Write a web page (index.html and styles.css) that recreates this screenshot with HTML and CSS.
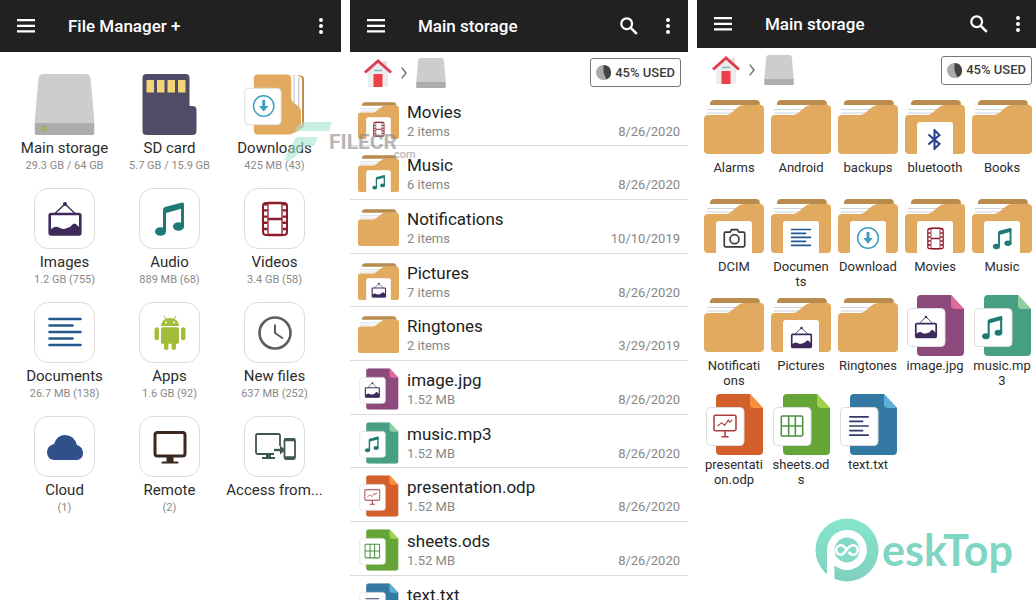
FILE: index.html
```html
<!DOCTYPE html>
<html lang="en">
<head>
<meta charset="utf-8">
<title>File Manager +</title>
<link rel="stylesheet" href="styles.css">
</head>
<body>
<svg class="sprite" aria-hidden="true">
  <defs>
    <linearGradient id="brandFill" x1="0" y1="0" x2="0" y2="1"><stop offset="0" stop-color="#86e6ce"/><stop offset="1" stop-color="#80cfbf"/></linearGradient>
  </defs>
  <symbol id="menu" viewBox="0 0 18 14"><path d="M0 1.2h18M0 6.8h18M0 12.4h18" stroke="#fff" stroke-width="2.2"/></symbol>
  <symbol id="dots" viewBox="0 0 4 16"><g fill="#fff"><circle cx="2" cy="2" r="2"/><circle cx="2" cy="8" r="2"/><circle cx="2" cy="14" r="2"/></g></symbol>
  <symbol id="search" viewBox="0 0 18 18"><g fill="none" stroke="#fff"><circle cx="6.7" cy="6.7" r="5.4" stroke-width="2.2"/><path d="M10.8 10.8l6 6" stroke-width="2.6"/></g></symbol>
  <symbol id="home" viewBox="0 0 28 28"><path d="M4 12L14 4l10 8v16H4z" fill="#ececec"/><path d="M19 2h4v7h-4z" fill="#e4e0e0"/><path d="M9.500 15h9v13h-9z" fill="#ee3e48"/><path d="M10 11.500h8" stroke="#7fb5bd" stroke-width="1.500"/><path d="M1 13.500L14 2l13 11.500" fill="none" stroke="#dc3f50" stroke-width="3"/></symbol>
  <symbol id="chevron" viewBox="0 0 6 12"><path d="M.7.700L5 6 .7 11.300" fill="none" stroke="#666" stroke-width="1.300"/></symbol>
  <symbol id="drive" viewBox="0 0 60 61"><path d="M9 0h42q4 0 5 4l4 45H0L4 4q1-4 5-4z" fill="#cdcdcd"/><path d="M0 49h60v10q0 2-2 2H2q-2 0-2-2z" fill="#adadad"/></symbol>
  <symbol id="driveOn" viewBox="0 0 60 61"><use href="#drive"/><circle cx="9" cy="54.500" r="2.600" fill="#a8b66a" stroke="#93b043"/></symbol>
  <symbol id="sd" viewBox="0 0 54 61"><path d="M4 0h39q4 0 4 4v28h3q4 0 4 4v21q0 4-4 4H4q-4 0-4-4V4q0-4 4-4z" fill="#514b67"/><path d="M4 6h7.500v12.500H4zM14.500 6H22v12.500h-7.500zM25 6h7.500v12.500H25zM35.500 6H43v12.500h-7.500z" fill="#f0d674"/></symbol>
  <symbol id="downloads" viewBox="0 0 62 61"><path d="M48 1h9q4 0 4 4v45q0 4-4 5h-9z" fill="#c48b46"/><path d="M44 1h9q6 1 6 4v47l-8 5z" fill="#fff"/><path d="M51 2v27M55.500 3v31" stroke="#c9cbd0" stroke-width="1.300"/><path d="M14 0h29q5 0 5 5v19q0 3 3 5l5 4q2 2 2 5v14q0 5-4 6l-7 3H14q-4 0-4-4V4q0-4 4-4z" fill="#e1aa5e"/><rect x=".7" y="14" width="37" height="37" rx="4" fill="#fff" stroke="#ddd"/><use href="#gDown" x="8" y="20" width="24" height="24"/></symbol>

  <symbol id="gPic" viewBox="0 0 36 36"><path d="M8 12.500L18 3l10 9.500" fill="none" stroke="#3d2a5b" stroke-width="1.300"/><circle cx="18" cy="3" r="2" fill="#3d2a5b"/><rect x="2.700" y="13" width="30.600" height="20.500" rx="1.500" fill="none" stroke="#3d2a5b" stroke-width="2.600"/><path d="M3 29q5-5 9-2.500t8 .5q3 0 5-3t5 0l3 3v7H3z" fill="#3d2a5b"/></symbol>
  <symbol id="gMusic" viewBox="0 0 36 36"><g fill="#1e7a74"><path d="M11 9q0-2 2-3L30 1.500q2-.5 2 1.500v4L14 12v18h-3z"/><path d="M29 4h3v23h-3z"/><ellipse cx="8.500" cy="30.500" rx="5.500" ry="4.300"/><ellipse cx="26.500" cy="25.500" rx="5.500" ry="4.300"/></g></symbol>
  <symbol id="gFilm" viewBox="0 0 36 36"><g fill="none" stroke="#8b1c2c"><rect x="6" y="2" width="24" height="32" rx="3" stroke-width="2"/><path d="M11 2v32M25 2v32" stroke-width="1.300"/><path d="M11 2h14M11 18h14M11 34h14" stroke-width="2.400"/><path d="M8.500 2v32M27.500 2v32" stroke-width="4" stroke-dasharray="2.400 3.800"/></g></symbol>
  <symbol id="gLines" viewBox="0 0 36 36"><path d="M2.500 4h31M2.500 10.500h23M2.500 17h31M2.500 23.500h23M2.500 30h31" stroke="#24578f" stroke-width="2.600" stroke-linecap="round"/></symbol>
  <symbol id="gText" viewBox="0 0 36 36"><path d="M2 3h32M2 10.500h23M2 18h32M2 25.500h23M2 33h32" stroke="#343a68" stroke-width="2.600"/></symbol>
  <symbol id="gDroid" viewBox="0 0 36 36"><g fill="#a1bd3a"><path d="M9 11q1-8 9-8t9 8z"/><rect x="9" y="12.300" width="18" height="16.500" rx="1.500"/><rect x="2.500" y="12.300" width="4.500" height="13" rx="2.200"/><rect x="29" y="12.300" width="4.500" height="13" rx="2.200"/><rect x="12" y="26" width="4.500" height="9" rx="2.200"/><rect x="19.500" y="26" width="4.500" height="9" rx="2.200"/></g><path d="M12 1l2 3M24 1l-2 3" stroke="#a1bd3a"/><circle cx="14" cy="7.500" r="1" fill="#fff"/><circle cx="22" cy="7.500" r="1" fill="#fff"/></symbol>
  <symbol id="gClock" viewBox="0 0 36 36"><g fill="none" stroke="#5a5e62"><circle cx="18" cy="18" r="15.500" stroke-width="2.600"/><path d="M18 9.500V18l8 5.500" stroke-width="2"/></g></symbol>
  <symbol id="gCloud" viewBox="0 0 36 36"><path d="M7 31q-7-1-7-8 0-6 7-8Q10 6 18 6q9 0 12 10 6 2 6 8 0 6-6 7z" fill="#30508b"/></symbol>
  <symbol id="gRemote" viewBox="0 0 36 36"><rect x="3" y="3.500" width="30" height="23.500" rx="2.500" fill="none" stroke="#3b2920" stroke-width="3"/><path d="M14.500 28h7v4.500h4q1 0 1 2h-17q0-2 1-2h4z" fill="#3b2920"/></symbol>
  <symbol id="gAccess" viewBox="0 0 42 36"><g fill="none" stroke="#40584e"><path d="M26 17V6.500Q26 5 24.500 5h-21Q2 5 2 6.500v17Q2 25 3.500 25H20" stroke-width="1.800"/><rect x="30.500" y="10" width="10.500" height="20" rx="1.500" stroke-width="1.800"/><path d="M30 11h11M30 28.500h11" stroke-width="2.400"/><path d="M20 21h9" stroke-width="2.400"/></g><path d="M26 16.500l5.500 4.500-5.500 4.500zM12 25h5v3h4v2H8v-2h4z" fill="#40584e"/></symbol>
  <symbol id="gDown" viewBox="0 0 36 36"><circle cx="18" cy="18" r="15.500" fill="none" stroke="#3f9cc0" stroke-width="2.200"/><path d="M15.800 9h4.400v9h5L18 26.500 10.800 18h5z" fill="#3f9cc0"/></symbol>
  <symbol id="gBlue" viewBox="0 0 36 36"><path d="M7.500 9.500l19 16L18 34V2l8.500 8.500-19 16" fill="none" stroke="#2c4394" stroke-width="3.600"/></symbol>
  <symbol id="gCam" viewBox="0 0 36 36"><g fill="none" stroke="#38383e" stroke-width="2.600"><path d="M4 8h7l2.500-4h9L25 8h7q2 0 2 2v19q0 2-2 2H4q-2 0-2-2V10q0-2 2-2z"/><circle cx="18" cy="19" r="7"/></g></symbol>
  <symbol id="gShow" viewBox="0 0 36 36"><g fill="none" stroke="#a93e40" stroke-width="2.300"><rect x="1.500" y="2" width="33" height="23" rx="2"/><path d="M18 25v9M12.500 34h11"/><path d="M7 18l6-5 4.500 4 5.500-8 2 3.500 4-4" stroke-width="1.600"/></g></symbol>
  <symbol id="gSheet" viewBox="0 0 36 36"><path d="M4 3h28q2 0 2 2v26q0 2-2 2H4q-2 0-2-2V5q0-2 2-2zM13 3v30M23 3v30M2 18h32" fill="none" stroke="#4c9143" stroke-width="2.300"/></symbol>

  <symbol id="folder" viewBox="0 0 60 61"><path d="M6 6q1-3 4-3h42q3 0 4 3v10H6z" fill="#b98b4c"/><path d="M55 5l3 6h-4z" fill="#e1aa5e"/><path d="M3 8h51v14H2z" fill="#fff"/><path d="M3 12.500h31M3 16h26" stroke="#cdd3dc"/><path d="M0 22q0-4 4-4h18q3 0 5-2l6-5q3-3 7-3h16q4 0 4 4v41q0 4-4 4H4q-4 0-4-4z" fill="#e1aa5e"/></symbol>
  <symbol id="folderBadge" viewBox="0 0 60 61"><use href="#folder"/><path d="M15 25h30q3 0 3 3v30H12V28q0-3 3-3z" fill="#fff"/></symbol>
  <symbol id="fPic" viewBox="0 0 60 61"><use href="#folderBadge"/><use href="#gPic" x="19" y="31" width="23" height="23"/></symbol>
  <symbol id="fMusic" viewBox="0 0 60 61"><use href="#folderBadge"/><use href="#gMusic" x="19" y="31" width="23" height="23"/></symbol>
  <symbol id="fFilm" viewBox="0 0 60 61"><use href="#folderBadge"/><use href="#gFilm" x="19" y="31" width="23" height="23"/></symbol>
  <symbol id="fLines" viewBox="0 0 60 61"><use href="#folderBadge"/><use href="#gLines" x="19" y="31" width="22" height="22"/></symbol>
  <symbol id="fDown" viewBox="0 0 60 61"><use href="#folderBadge"/><use href="#gDown" x="18" y="30" width="24" height="24"/></symbol>
  <symbol id="fBlue" viewBox="0 0 60 61"><use href="#folderBadge"/><use href="#gBlue" x="19" y="32" width="21" height="21"/></symbol>
  <symbol id="fCam" viewBox="0 0 60 61"><use href="#folderBadge"/><use href="#gCam" x="19" y="31" width="23" height="23"/></symbol>

  <symbol id="sheetCut" viewBox="0 0 60 61"><path d="M16 0h30l13 14v43q0 4-4 4H16q-4 0-4-4V4q0-4 4-4z"/></symbol>
  <symbol id="docBadge" viewBox="0 0 60 61"><rect x="2.500" y="13.500" width="37.500" height="38" rx="4" fill="#fff" stroke="#ddd"/></symbol>
  <symbol id="dPic" viewBox="0 0 60 61"><use href="#sheetCut" fill="#8c4a7c"/><path d="M46 0l13 14H50q-4 0-4-4z" fill="#e0699c"/><use href="#docBadge"/><use href="#gPic" x="9" y="20" width="24" height="24"/></symbol>
  <symbol id="dMusic" viewBox="0 0 60 61"><use href="#sheetCut" fill="#48a084"/><path d="M46 0l13 14H50q-4 0-4-4z" fill="#8fcfa0"/><use href="#docBadge"/><use href="#gMusic" x="8" y="20" width="25" height="25"/></symbol>
  <symbol id="dShow" viewBox="0 0 60 61"><use href="#sheetCut" fill="#d3602b"/><path d="M46 0l13 14H50q-4 0-4-4z" fill="#f7913d"/><use href="#docBadge"/><use href="#gShow" x="9" y="20" width="24" height="24"/></symbol>
  <symbol id="dSheet" viewBox="0 0 60 61"><use href="#sheetCut" fill="#65a538"/><path d="M46 0l13 14H50q-4 0-4-4z" fill="#a2d04b"/><use href="#docBadge"/><use href="#gSheet" x="9" y="20" width="24" height="24"/></symbol>
  <symbol id="dText" viewBox="0 0 60 61"><use href="#sheetCut" fill="#3479a4"/><path d="M46 0l13 14H50q-4 0-4-4z" fill="#5cb0d8"/><use href="#docBadge"/><use href="#gText" x="10" y="21" width="22" height="22"/></symbol>
</svg>

<main class="screens">
  <section class="screen">
    <header class="bar">
      <button class="icon-btn" aria-label="Menu"><svg class="menu"><use href="#menu"/></svg></button>
      <h1 class="title">File Manager +</h1>
      <button class="icon-btn more" aria-label="More"><svg class="dots"><use href="#dots"/></svg></button>
    </header>
    <nav class="places">
      <a class="place" href="#"><svg class="place-icon"><use href="#driveOn"/></svg><span class="place-name">Main storage</span><span class="place-info">29.3 GB / 64 GB</span></a>
      <a class="place" href="#"><svg class="place-icon"><use href="#sd"/></svg><span class="place-name">SD card</span><span class="place-info">5.7 GB / 15.9 GB</span></a>
      <a class="place" href="#"><svg class="place-icon"><use href="#downloads"/></svg><span class="place-name">Downloads</span><span class="place-info">425 MB (43)</span></a>
      <a class="place" href="#"><span class="place-icon framed"><svg class="glyph"><use href="#gPic"/></svg></span><span class="place-name">Images</span><span class="place-info">1.2 GB (755)</span></a>
      <a class="place" href="#"><span class="place-icon framed"><svg class="glyph"><use href="#gMusic"/></svg></span><span class="place-name">Audio</span><span class="place-info">889 MB (68)</span></a>
      <a class="place" href="#"><span class="place-icon framed"><svg class="glyph"><use href="#gFilm"/></svg></span><span class="place-name">Videos</span><span class="place-info">3.4 GB (58)</span></a>
      <a class="place" href="#"><span class="place-icon framed"><svg class="glyph"><use href="#gLines"/></svg></span><span class="place-name">Documents</span><span class="place-info">26.7 MB (138)</span></a>
      <a class="place" href="#"><span class="place-icon framed"><svg class="glyph"><use href="#gDroid"/></svg></span><span class="place-name">Apps</span><span class="place-info">1.6 GB (92)</span></a>
      <a class="place" href="#"><span class="place-icon framed"><svg class="glyph"><use href="#gClock"/></svg></span><span class="place-name">New files</span><span class="place-info">637 MB (252)</span></a>
      <a class="place" href="#"><span class="place-icon framed"><svg class="glyph"><use href="#gCloud"/></svg></span><span class="place-name">Cloud</span><span class="place-info">(1)</span></a>
      <a class="place" href="#"><span class="place-icon framed"><svg class="glyph"><use href="#gRemote"/></svg></span><span class="place-name">Remote</span><span class="place-info">(2)</span></a>
      <a class="place" href="#"><span class="place-icon framed"><svg class="glyph wide"><use href="#gAccess"/></svg></span><span class="place-name">Access from...</span></a>
    </nav>
    <div class="filecr">
      <svg class="filecr-mark" viewBox="0 0 48 40"><path d="M22 0h26l-3 9H10q5-9 12-9zM12 15h22l-4 9H20q-4 9-14 14H0z" fill="#a5e6d0"/></svg>
      <span class="filecr-name">FILECR</span><span class="filecr-com">.com</span>
    </div>
  </section>

  <section class="screen">
    <header class="bar">
      <button class="icon-btn" aria-label="Menu"><svg class="menu"><use href="#menu"/></svg></button>
      <h1 class="title">Main storage</h1>
      <button class="icon-btn" aria-label="Search"><svg class="search"><use href="#search"/></svg></button>
      <button class="icon-btn more" aria-label="More"><svg class="dots"><use href="#dots"/></svg></button>
    </header>
    <div class="crumbs">
      <a href="#" aria-label="Home"><svg class="home"><use href="#home"/></svg></a>
      <svg class="chevron"><use href="#chevron"/></svg>
      <a href="#" aria-label="Main storage"><svg class="drive"><use href="#drive"/></svg></a>
      <button class="usage"><svg class="pie" viewBox="0 0 16 16"><circle cx="8" cy="8" r="8" fill="#aaa"/><path d="M8 0a8 8 0 0 1 3 15.400L8 8z" fill="#444"/></svg>45% USED</button>
    </div>
    <div class="list">
      <a class="row" href="#"><svg class="row-icon"><use href="#fFilm"/></svg><span class="row-text"><span class="row-name">Movies</span><span class="row-meta"><span>2 items</span><span>8/26/2020</span></span></span></a>
      <a class="row" href="#"><svg class="row-icon"><use href="#fMusic"/></svg><span class="row-text"><span class="row-name">Music</span><span class="row-meta"><span>6 items</span><span>8/26/2020</span></span></span></a>
      <a class="row" href="#"><svg class="row-icon"><use href="#folder"/></svg><span class="row-text"><span class="row-name">Notifications</span><span class="row-meta"><span>2 items</span><span>10/10/2019</span></span></span></a>
      <a class="row" href="#"><svg class="row-icon"><use href="#fPic"/></svg><span class="row-text"><span class="row-name">Pictures</span><span class="row-meta"><span>7 items</span><span>8/26/2020</span></span></span></a>
      <a class="row" href="#"><svg class="row-icon"><use href="#folder"/></svg><span class="row-text"><span class="row-name">Ringtones</span><span class="row-meta"><span>2 items</span><span>3/29/2019</span></span></span></a>
      <a class="row" href="#"><svg class="row-icon"><use href="#dPic"/></svg><span class="row-text"><span class="row-name">image.jpg</span><span class="row-meta"><span>1.52 MB</span><span>8/26/2020</span></span></span></a>
      <a class="row" href="#"><svg class="row-icon"><use href="#dMusic"/></svg><span class="row-text"><span class="row-name">music.mp3</span><span class="row-meta"><span>1.52 MB</span><span>8/26/2020</span></span></span></a>
      <a class="row" href="#"><svg class="row-icon"><use href="#dShow"/></svg><span class="row-text"><span class="row-name">presentation.odp</span><span class="row-meta"><span>1.52 MB</span><span>8/26/2020</span></span></span></a>
      <a class="row" href="#"><svg class="row-icon"><use href="#dSheet"/></svg><span class="row-text"><span class="row-name">sheets.ods</span><span class="row-meta"><span>1.52 MB</span><span>8/26/2020</span></span></span></a>
      <a class="row" href="#"><svg class="row-icon"><use href="#dText"/></svg><span class="row-text"><span class="row-name">text.txt</span></span></a>
    </div>
  </section>

  <section class="screen">
    <header class="bar short">
      <button class="icon-btn" aria-label="Menu"><svg class="menu"><use href="#menu"/></svg></button>
      <h1 class="title">Main storage</h1>
      <button class="icon-btn" aria-label="Search"><svg class="search"><use href="#search"/></svg></button>
      <button class="icon-btn more" aria-label="More"><svg class="dots"><use href="#dots"/></svg></button>
    </header>
    <div class="crumbs tight">
      <a href="#" aria-label="Home"><svg class="home"><use href="#home"/></svg></a>
      <svg class="chevron"><use href="#chevron"/></svg>
      <a href="#" aria-label="Main storage"><svg class="drive"><use href="#drive"/></svg></a>
      <button class="usage"><svg class="pie" viewBox="0 0 16 16"><circle cx="8" cy="8" r="8" fill="#aaa"/><path d="M8 0a8 8 0 0 1 3 15.400L8 8z" fill="#444"/></svg>45% USED</button>
    </div>
    <div class="files">
      <a class="file" href="#"><svg class="file-icon"><use href="#folder"/></svg>Alarms</a>
      <a class="file" href="#"><svg class="file-icon"><use href="#folder"/></svg>Android</a>
      <a class="file" href="#"><svg class="file-icon"><use href="#folder"/></svg>backups</a>
      <a class="file" href="#"><svg class="file-icon"><use href="#fBlue"/></svg>bluetooth</a>
      <a class="file" href="#"><svg class="file-icon"><use href="#folder"/></svg>Books</a>
      <a class="file" href="#"><svg class="file-icon"><use href="#fCam"/></svg>DCIM</a>
      <a class="file" href="#"><svg class="file-icon"><use href="#fLines"/></svg>Documen<wbr>ts</a>
      <a class="file" href="#"><svg class="file-icon"><use href="#fDown"/></svg>Download</a>
      <a class="file" href="#"><svg class="file-icon"><use href="#fFilm"/></svg>Movies</a>
      <a class="file" href="#"><svg class="file-icon"><use href="#fMusic"/></svg>Music</a>
      <a class="file" href="#"><svg class="file-icon"><use href="#folder"/></svg>Notificati<wbr>ons</a>
      <a class="file" href="#"><svg class="file-icon"><use href="#fPic"/></svg>Pictures</a>
      <a class="file" href="#"><svg class="file-icon"><use href="#folder"/></svg>Ringtones</a>
      <a class="file" href="#"><svg class="file-icon"><use href="#dPic"/></svg>image.jpg</a>
      <a class="file" href="#"><svg class="file-icon"><use href="#dMusic"/></svg>music.mp<wbr>3</a>
      <a class="file" href="#"><svg class="file-icon"><use href="#dShow"/></svg>presentati<wbr>on.odp</a>
      <a class="file" href="#"><svg class="file-icon"><use href="#dSheet"/></svg>sheets.od<wbr>s</a>
      <a class="file" href="#"><svg class="file-icon"><use href="#dText"/></svg>text.txt</a>
    </div>
    <div class="brand">
      <svg class="brand-mark" viewBox="0 0 64 64"><circle cx="32" cy="32" r="31.500" fill="url(#brandFill)"/><path d="M12 32a20 20 0 1 1 7.500 15.500V64H12z" fill="#fff"/><circle cx="32" cy="32" r="12.500" fill="#84dac7"/><path d="M32 32c-3-4-4.500-4.800-6-4.800a4.800 4.800 0 0 0 0 9.600c4 0 6-9.600 12-9.600a4.800 4.800 0 0 1 0 9.600c-1.500 0-3-.8-4.500-3" fill="none" stroke="#fff" stroke-width="2.600"/></svg>
      <span class="brand-name">eskTop</span>
    </div>
  </section>
</main>
</body>
</html>
```
FILE: styles.css
```css
* { box-sizing: border-box; }
body { margin: 0; background: #fff; color: #2c2c2c; font-family: Roboto, "Liberation Sans", sans-serif; }
a { color: inherit; text-decoration: none; }
svg { display: block; }
.sprite { position: absolute; width: 0; height: 0; }
.screens { display: grid; grid-template-columns: 341fr 338fr 339fr; grid-template-rows: 100%; gap: 9px; height: 100vh; overflow: hidden; }
.screen { position: relative; min-width: 0; }

.bar { display: flex; align-items: center; height: 52px; padding: 0 18px 0 17px; background: #212121; color: #fff; }
.bar.short { height: 48px; padding-right: 16px; }
.title { flex: 1; margin: 0 0 0 33px; font-size: 17px; line-height: 24px; font-weight: 500; }
.icon-btn { display: block; padding: 0; border: 0; background: none; }
.more { margin-left: 28px; }
.menu { width: 18px; height: 14px; }
.search { width: 18px; height: 18px; }
.dots { width: 4px; height: 16px; }

.places { display: grid; grid-template-columns: repeat(3, 1fr); grid-auto-rows: 99px; row-gap: 15px; padding: 22px 14px 22px 12px; }
.place { display: flex; flex-direction: column; align-items: center; }
.place-icon { width: 61px; height: 61px; flex: none; }
.framed { display: flex; align-items: center; justify-content: center; border: 1px solid #dcdcdc; border-radius: 14px; }
.glyph { width: 36px; height: 36px; }
.glyph.wide { width: 42px; }
.place-name { margin-top: 3px; font-size: 15px; line-height: 20px; white-space: nowrap; }
.place-info { font-size: 11px; line-height: 15px; color: #8a8a8a; white-space: nowrap; }

.crumbs { display: flex; align-items: center; height: 41px; padding: 0 7px 0 14px; }
.crumbs.tight { height: 44px; padding: 0 4px 0 15px; }
.home { width: 28px; height: 28px; }
.chevron { width: 6px; height: 12px; margin: 0 9px; }
.drive { width: 30px; height: 30px; }
.usage { display: flex; align-items: center; gap: 4px; height: 29px; margin-left: auto; padding: 0 5px; border: 1px solid #777; border-radius: 3px; background: #fff; color: #3c3c3c; font: 500 13px/16px Roboto, "Liberation Sans", sans-serif; }
.pie { width: 15px; height: 15px; }

.list { display: grid; grid-auto-rows: 53px 54px 54px; }
.row { display: flex; gap: 8px; padding: 7px 8px 0; border-bottom: 1px solid #dcdcdc; }
.row-icon { width: 41px; height: 42px; flex: none; }
.row-text { flex: 1; padding-top: 1px; }
.row-name { display: block; font-size: 17px; line-height: 22px; color: #222; }
.row-meta { display: flex; justify-content: space-between; font-size: 13px; line-height: 18px; color: #888; }

.files { display: grid; grid-template-columns: repeat(5, 1fr); grid-auto-rows: 93px; gap: 6px 7px; padding: 5px 4px 0 7px; }
.file { font-size: 13px; line-height: 15px; text-align: center; white-space: normal; }
.file-icon { width: 100%; height: 61px; margin-bottom: 2px; }

.filecr { position: absolute; left: 284px; top: 122px; display: flex; opacity: .6; color: #888; z-index: 1; }
.filecr-mark { width: 48px; height: 40px; }
.filecr-name { margin-top: 9px; margin-left: -3px; font-size: 21px; line-height: 22px; font-weight: 700; }
.filecr-com { margin-top: 26px; margin-left: -6px; font-size: 11px; line-height: 14px; font-weight: 500; }
.brand { position: absolute; right: 23px; bottom: 18px; display: flex; align-items: center; gap: 3px; color: #80d6c2; }
.brand-mark { width: 64px; height: 64px; }
.brand-name { font: 700 43px/52px Lato, sans-serif; }
```
